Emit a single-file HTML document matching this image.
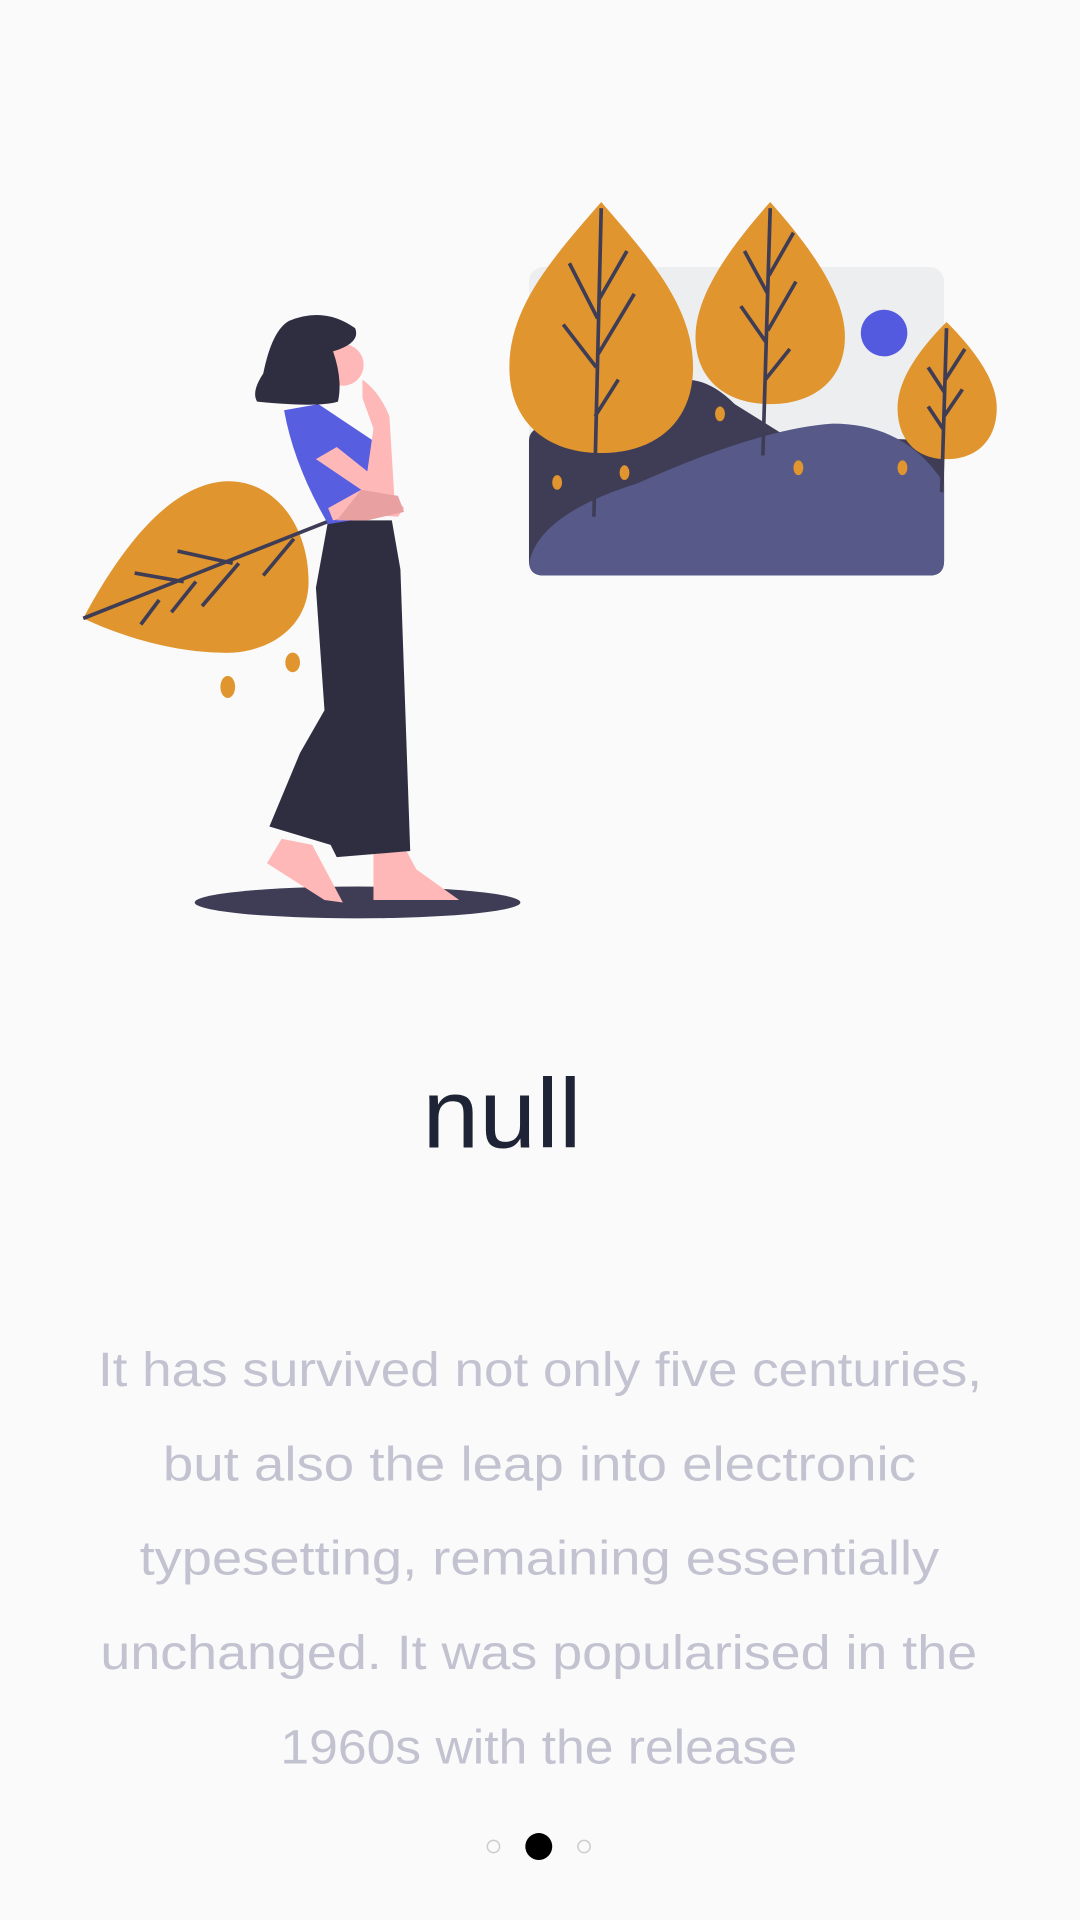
<!DOCTYPE html>
<html><head><meta charset="utf-8"><style>
html,body{margin:0;padding:0;background:#fafafa;}
body{width:1080px;height:1920px;overflow:hidden;position:relative;font-family:"Liberation Sans",sans-serif;}
svg{position:absolute;left:0;top:0;}
</style></head><body>
<svg width="1080" height="1920" viewBox="0 0 882 1568">
<rect width="882" height="1568" fill="#fafafa"/>
<rect x="432" y="218" width="339" height="252" rx="12" fill="#edeef0"/>
<path d="M432 360 Q432 350 445 348 L520 330 Q560 290 600 330 L640 355 L771 360 L771 458 Q771 470 759 470 L444 470 Q432 470 432 458 Z" fill="#3f3d56"/>
<path d="M432 460 Q440 420 520 395 Q620 350 680 346 Q740 346 771 395 L771 458 Q771 470 759 470 L444 470 Q432 470 432 458 Z" fill="#575a89"/>
<circle cx="722" cy="272" r="19" fill="#535ae0"/>
<g fill="#e0952e">
<path d="M491 165 C530 210 566 250 566 300 C566 345 535 370 491 370 C447 370 416 345 416 300 C416 250 452 210 491 165Z"/>
<path d="M629 165 C660 200 690 240 690 275 C690 310 665 330 629 330 C593 330 568 310 568 275 C568 240 598 200 629 165Z"/>
<path d="M773 263 C795 285 814 310 814 333 C814 360 797 375 773 375 C749 375 733 360 733 333 C733 310 751 285 773 263Z"/>
<ellipse cx="455" cy="394" rx="4" ry="6"/><ellipse cx="510" cy="386" rx="4" ry="6"/><ellipse cx="588" cy="338" rx="4" ry="6"/><ellipse cx="652" cy="382" rx="4" ry="6"/><ellipse cx="737" cy="382" rx="4" ry="6"/>
</g>
<g stroke="#3f3d56" stroke-width="3" fill="none">
<path d="M491 170 L485 422 M488 260 L465 215 M489 245 L512 205 M487 300 L460 265 M488 290 L518 240 M486 340 L505 310"/>
<path d="M629 170 L623 372 M627 240 L608 205 M628 225 L648 190 M626 280 L605 250 M627 270 L650 230 M625 310 L645 285"/>
<path d="M773 268 L769 402 M771 320 L758 300 M772 310 L788 285 M770 350 L758 332 M771 340 L786 318"/>
</g>
<path d="M68 505 C100 445 140 395 185 393 C225 392 252 430 252 475 C252 515 215 535 180 533 C140 532 100 520 68 505Z" fill="#e0952e"/>
<g stroke="#3f3d56" stroke-width="3" fill="none"><path d="M68 505 L270 425 M110 468 L150 475 M145 450 L190 460 M130 490 L115 510 M160 475 L140 500 M195 460 L165 495 M240 440 L215 470"/></g>
<ellipse cx="186" cy="561" rx="6" ry="9" fill="#e0952e"/><ellipse cx="239" cy="541" rx="6" ry="8" fill="#e0952e"/>
<ellipse cx="292" cy="737" rx="133" ry="13" fill="#3f3d56"/>
<path d="M230 685 L218 705 L265 735 L280 737 L255 690Z M305 695 L305 735 L375 735 L340 710 L332 695Z" fill="#ffb8b8"/>
<path d="M268 425 L320 425 L327 465 L335 695 L275 700 L270 690 L220 675 L245 615 L265 580 L258 480Z" fill="#2f2e41"/>
<path d="M232 335 L260 330 L305 360 L318 420 L268 428 Q240 380 232 335Z" fill="#575ee0"/>
<path d="M296 310 Q310 320 318 340 L322 405 L330 415 L325 422 L295 420 L272 425 L268 415 L295 400 L258 375 L275 365 L300 385 L305 350 L296 325Z" fill="#ffb8b8"/>
<path d="M295 400 L325 405 L330 418 L300 425 L275 425Z" fill="#e8a0a0"/>
<circle cx="280" cy="298" r="17" fill="#ffb8b8"/>
<path d="M236 262 Q265 250 290 268 Q295 280 272 287 Q280 310 276 328 Q260 333 210 328 Q205 320 215 305 Q222 270 236 262Z" fill="#2f2e41"/>
<text x="345" y="937" textLength="130" lengthAdjust="spacingAndGlyphs" font-family="Liberation Sans, sans-serif" font-size="80" fill="#1e2435">null</text>
<g font-family="Liberation Sans, sans-serif" font-size="39" fill="#c2c2d0" lengthAdjust="spacingAndGlyphs">
<text x="80" y="1132" textLength="722" lengthAdjust="spacingAndGlyphs">It has survived not only five centuries,</text>
<text x="133" y="1209" textLength="615" lengthAdjust="spacingAndGlyphs">but also the leap into electronic</text>
<text x="114" y="1286" textLength="653" lengthAdjust="spacingAndGlyphs">typesetting, remaining essentially</text>
<text x="82" y="1363" textLength="716" lengthAdjust="spacingAndGlyphs">unchanged. It was popularised in the</text>
<text x="229" y="1440" textLength="422" lengthAdjust="spacingAndGlyphs">1960s with the release</text>
</g>
<circle cx="403" cy="1508" r="5" fill="none" stroke="#ccc" stroke-width="1.2"/>
<circle cx="440" cy="1508" r="11" fill="#000"/>
<circle cx="477" cy="1508" r="5" fill="none" stroke="#ccc" stroke-width="1.2"/>
</svg>
</body></html>
